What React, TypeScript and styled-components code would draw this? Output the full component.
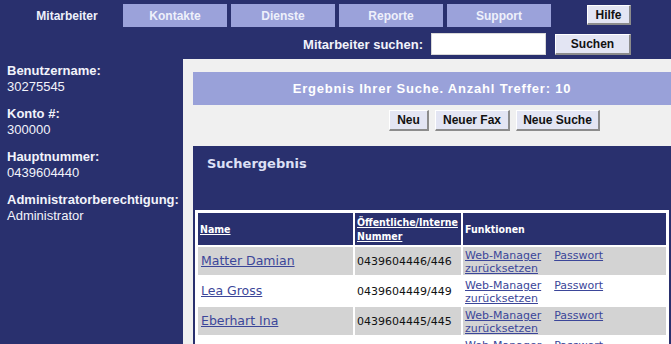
import React from 'react'
import styled, { createGlobalStyle } from 'styled-components'

const navy = '#29306e'
const lilac = '#9ba2da'
const linkColor = '#3b4699'

const GlobalStyle = createGlobalStyle`
  html, body {
    margin: 0;
    padding: 0;
    background: ${navy};
    overflow: hidden;
  }
  body {
    font-family: 'Liberation Sans', Arial, sans-serif;
  }
`

const Page = styled.div`
  width: 671px;
  height: 344px;
  background: ${navy};
  display: flex;
  flex-direction: column;
  overflow: hidden;
`

const TopBar = styled.div`
  height: 30px;
  flex-shrink: 0;
  display: flex;
  align-items: flex-start;
  padding: 4px 40px 0 15px;
  box-sizing: border-box;
`

const Tabs = styled.div`
  display: flex;
  gap: 4px;
`

const Tab = styled.div<{ $active?: boolean }>`
  width: 104px;
  height: 23px;
  display: flex;
  align-items: center;
  justify-content: center;
  background: ${({ $active }) => ($active ? 'transparent' : lilac)};
  color: #eef0fb;
  font-weight: bold;
  font-size: 12px;
`

const Button = styled.button<{ $width?: number }>`
  font-family: 'Liberation Sans', Arial, sans-serif;
  font-weight: bold;
  font-size: 12px;
  color: #111;
  background: #e3e5f3;
  border-style: solid;
  border-width: 1px 2px 2px 1px;
  border-color: #ffffff #8c8c8c #8c8c8c #ffffff;
  padding: 0;
  width: ${({ $width }) => ($width ? `${$width}px` : 'auto')};
  height: 21px;
  box-sizing: border-box;
`

const HelpButton = styled(Button)`
  margin-left: auto;
  margin-top: 1px;
  height: 20px;
`

const SearchBar = styled.div`
  height: 28px;
  flex-shrink: 0;
  display: flex;
  align-items: center;
  justify-content: flex-end;
  padding-right: 40px;
  gap: 8px;
`

const SearchLabel = styled.label`
  color: #f2f3fb;
  font-weight: bold;
  font-size: 13px;
`

const SearchInput = styled.input`
  width: 115px;
  height: 22px;
  box-sizing: border-box;
  border: 1px solid #d8d8d8;
  background: #fff;
  margin-right: 1px;
`

const Body = styled.div`
  flex: 1;
  display: flex;
  min-height: 0;
`

const Sidebar = styled.div`
  width: 183px;
  flex-shrink: 0;
  padding: 5px 0 0 7px;
  box-sizing: border-box;
  display: flex;
  flex-direction: column;
  gap: 11px;
`

const InfoBlock = styled.div`
  display: flex;
  flex-direction: column;
  color: #f2f3fb;
  line-height: 16px;
`

const InfoLabel = styled.span`
  font-weight: bold;
  font-size: 13px;
`

const InfoValue = styled.span`
  font-size: 13px;
`

const Main = styled.div`
  flex: 1;
  min-height: 0;
  background: #f0f0f0;
  padding: 13px 0 0 10px;
  display: flex;
  flex-direction: column;
  margin-top: 1px;
`

const Banner = styled.div`
  height: 33px;
  flex-shrink: 0;
  background: #99a1d9;
  color: #fff;
  font-weight: bold;
  font-size: 13px;
  letter-spacing: 0.8px;
  display: flex;
  align-items: center;
  justify-content: center;
`

const ActionRow = styled.div`
  display: flex;
  flex-shrink: 0;
  gap: 6px;
  padding: 5px 0 0 196px;
  height: 41px;
  box-sizing: border-box;
`

const ResultPanel = styled.div`
  flex: 1;
  min-height: 0;
  overflow: hidden;
  background: ${navy};
  padding: 10px 2px 0 2px;
  display: flex;
  flex-direction: column;
`

const PanelTitle = styled.div`
  flex-shrink: 0;
  color: #dde0f6;
  font-family: 'DejaVu Sans', Verdana, sans-serif;
  font-weight: bold;
  font-size: 13px;
  padding-left: 12px;
  height: 54px;
`

const Table = styled.table`
  flex-shrink: 0;
  background: #fff;
  border: 1px solid #fff;
  border-spacing: 2px;
  width: 474px;
  table-layout: fixed;
  font-family: 'DejaVu Sans', Verdana, sans-serif;
`

const HeadCell = styled.th`
  background: ${navy};
  color: #fff;
  text-align: left;
  font-family: 'DejaVu Sans Condensed', 'DejaVu Sans', Verdana, sans-serif;
  font-size: 10.5px;
  font-weight: bold;
  line-height: 14px;
  height: 32px;
  padding: 0 0 0 2px;
  vertical-align: middle;
  box-sizing: border-box;
  white-space: nowrap;
`

const HeadLink = styled.a`
  color: #fff;
  text-decoration: underline;
`

const Row = styled.tr<{ $shade: boolean }>`
  background: ${({ $shade }) => ($shade ? '#d3d3d3' : '#ffffff')};
`

const Cell = styled.td`
  padding: 1px 2px 1px 2px;
  height: 28px;
  vertical-align: middle;
  font-size: 11px;
  line-height: 13px;
  color: #111;
  box-sizing: border-box;
`

const NameCell = styled(Cell)`
  padding-left: 3px;
`

const NameLink = styled.a`
  color: ${linkColor};
  font-size: 12.5px;
  text-decoration: underline;
`

const FuncCell = styled(Cell)`
  vertical-align: top;
  padding-top: 2px;
  padding-bottom: 0;
`

const FuncLink = styled.a`
  color: ${linkColor};
  text-decoration: underline;
`

const Spacer = styled.span`
  display: inline-block;
  width: 13px;
`

const people = [
  { name: 'Matter Damian', number: '0439604446/446' },
  { name: 'Lea Gross', number: '0439604449/449' },
  { name: 'Eberhart Ina', number: '0439604445/445' },
  { name: 'Keller Marco', number: '0439604447/447' },
  { name: 'Frei Sandra', number: '0439604448/448' },
]

const info = [
  { label: 'Benutzername:', value: '30275545' },
  { label: 'Konto #:', value: '300000' },
  { label: 'Hauptnummer:', value: '0439604440' },
  { label: 'Administratorberechtigung:', value: 'Administrator' },
]

export default function App() {
  return (
    <Page>
      <GlobalStyle />
      <TopBar>
        <Tabs>
          <Tab $active>Mitarbeiter</Tab>
          <Tab>Kontakte</Tab>
          <Tab>Dienste</Tab>
          <Tab>Reporte</Tab>
          <Tab>Support</Tab>
        </Tabs>
        <HelpButton $width={44}>Hilfe</HelpButton>
      </TopBar>
      <SearchBar>
        <SearchLabel>Mitarbeiter suchen:</SearchLabel>
        <SearchInput />
        <Button $width={76}>Suchen</Button>
      </SearchBar>
      <Body>
        <Sidebar>
          {info.map((i) => (
            <InfoBlock key={i.label}>
              <InfoLabel>{i.label}</InfoLabel>
              <InfoValue>{i.value}</InfoValue>
            </InfoBlock>
          ))}
        </Sidebar>
        <Main>
          <Banner>Ergebnis Ihrer Suche. Anzahl Treffer: 10</Banner>
          <ActionRow>
            <Button $width={40}>Neu</Button>
            <Button $width={75}>Neuer Fax</Button>
            <Button $width={84}>Neue Suche</Button>
          </ActionRow>
          <ResultPanel>
            <PanelTitle>Suchergebnis</PanelTitle>
            <Table>
              <colgroup>
                <col style={{ width: 155 }} />
                <col style={{ width: 106 }} />
                <col />
              </colgroup>
              <thead>
                <tr>
                  <HeadCell>
                    <HeadLink>Name</HeadLink>
                  </HeadCell>
                  <HeadCell>
                    <HeadLink>
                      Öffentliche/Interne
                      <br />
                      Nummer
                    </HeadLink>
                  </HeadCell>
                  <HeadCell>Funktionen</HeadCell>
                </tr>
              </thead>
              <tbody>
                {people.map((p, i) => (
                  <Row key={p.number} $shade={i % 2 === 0}>
                    <NameCell>
                      <NameLink>{p.name}</NameLink>
                    </NameCell>
                    <Cell>{p.number}</Cell>
                    <FuncCell>
                      <FuncLink>Web-Manager</FuncLink>
                      <Spacer />
                      <FuncLink>Passwort zurücksetzen</FuncLink>
                    </FuncCell>
                  </Row>
                ))}
              </tbody>
            </Table>
          </ResultPanel>
        </Main>
      </Body>
    </Page>
  )
}
